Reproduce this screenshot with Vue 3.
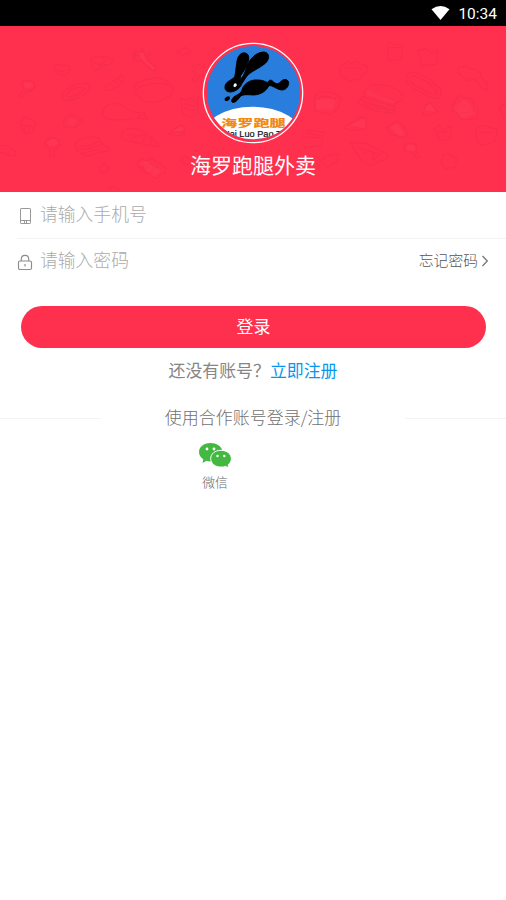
<script setup>
import { ref } from 'vue'

const phone = ref('')
const password = ref('')
</script>

<template>
  <main class="screen">
    <div class="status">
      <svg class="wifi" viewBox="0 0 20 16"><path d="M1 4.2Q10-2.3 19 4.2L10 15Z" fill="#fff" /></svg>
      <span>10:34</span>
    </div>

    <header class="hero">
      <svg class="doodles" viewBox="0 0 506 166" aria-hidden="true">
        <g transform="translate(0 -6) scale(.33333)">
          <g class="line">
            <path d="M65 190q10-14 28-7 15 6 10 20-8 12-22 8l-14 20q-12 2-7-9l12-18q-10-6-7-14Z" />
            <path d="M160 145q6-15 24-8 20-5 27 8-4 20-24 20-22-2-27-20Z M168 148l16 8 18-8" />
            <path d="M272 120q15-16 28-8 18-7 40 9-5 14-26 14l-28 17q-15-4-8-17Z M282 128l18 8 16-14" />
            <path d="M398 100l7 14-2-25 12 20 12-25 8 25 16-10-9 22 24 20q10 12-9 11l-29-28-28-2Z" />
            <path d="M530 94l30-12 12 14-22 10Z M575 142q14-16 25-6M578 150l10 12-12 18 10 5 16-22" />
            <path d="M186 232q6-28 48-40 34-6 36 6-4 24-40 38-38 13-44-4Z M199 228q8-20 32-25 24-2 22 5-8 13-28 19-22 8-26 1Z" />
            <path d="M315 211q0-17 22-26l26-20q15 11 1 28-22 18-49 18Z M332 194l14 7M341 184l14 8M351 176l12 7" />
            <path d="M402 205q5-21 22-19 13-11 30-8 15-9 29-2 14 0 20 13 18 7 17 21-5 20-25 24-20 15-44 12-29-1-36-19-13-9-13-22Z M410 207q19-15 32-11 17-9 28-5 25-4 36 6M425 211v9M445 222v9M464 207v9M488 202v9" />
            <path d="M308 286q-2-29 31-36 25 0 44 18 20 11 37 11 8-7 16 0l-4 8 10 5q2 8-11 7l-13-5q-19 5-35 5-31 3-48-1-22-1-27-12Z M419 280l-1 13" />
            <path d="M190 302l14-14 15-4 15 10 15 7-22 20q-17 9-36-4Z M198 300q20 15 40 2" />
            <path d="M63 315q-7-10 4-15 8-14 17-3 15-2 19 9 12 8-1 15l-5 19H68Z M63 315l40 6M72 322l3 14M86 322v14" />
            <path d="M136 366q15-18 33-10 17 9 7 22-7 7-14 6l2 24q-9 6-13 0l-4-25q-13-5-11-17Z" />
            <path d="M365 350q-3-17 17-24 44-2 65 20 17 14 34 33-49-2-80-14-30-3-36-15Z M383 346q18-8 25-1l-11 15M407 355q17-18 31-7l-14 20M433 366q12-16 24-12l-7 21" />
            <path d="M505 342l35-26 14 5-2 23-23 4Z M513 338l38-3M542 234l17 9 11-9 12 9 13-10-1 46-26 13-20-10Z M550 250l39 10M553 264l36 8" />
            <path d="M226 383q-5-16 17-25 29-13 57-2l8 18 19 11q-5 13-24 10l-35 13q-28-2-42-25Z M229 378q36 7 70-17M241 389q36-1 68-20M246 400q31-8 53-13" />
            <path d="M413 425l14-9 14 7 13-10 16 16 14-2 5 14 11 5q-5 15-17 15l-12 14q-13 1-16-13l-18-2-10-17q-17 4-14-18Z M427 434l11 9 13-13 12 14 13-5M446 458l20-10" />
            <path d="M0 376q25-2 43 15 10 17-5 18-13-6-38-11M300 442l13-12 13 16-10 14-18-6ZM538 421l19-13 20 15-14 12ZM326 510q15-18 32 0" />
          </g>
          <g class="tint"><path d="M72 188h22l6 13-23 4ZM197 305l17-9 20 8-18 12ZM412 98l20 1 4 22 28 21-6 6-30-27ZM518 335l23-15 10 3-1 12ZM141 366l22-10 11 10-8 12-21-1ZM419 428l20-6 44 32-21 17Z" /></g>
        </g>
        <g transform="translate(306 -6) scale(.33333)">
          <g class="line">
            <path d="M245 69l45 7-5 44-38 1Z M252 83h29M337 92l25-6 12 15 23-10-7 42-42 4Z" />
            <path d="M102 154q-4-19 11-20 13-14 24-4 16-11 27 2 20 0 23 16-5 13-17 14-4 22-22 15-14 12-26-2-20 0-20-21Z M116 148q16-11 25 0 16-10 27 0" />
            <path d="M301 180q-3-18 16-24 27 4 57 25l30 26q3 16-3 29-15 2-35-7-33-18-46-25-19-13-19-24Z M311 178q5-13 15-9 29 6 62 38 8 19-5 17-22-9-52-26-20-10-20-20Z" />
            <path d="M457 144l26-8 10 12 18-1 14 14-3 9 20 17v25l-15-8-20-27-21 5-29-23Z" />
            <path d="M178 217q2-28 51-22 46 5 61 32l-2 13-19 8-5 31q-48 1-103-27l-5-10 19-12Z M176 216l91 28M160 239l104 32M167 229l96 29M174 249l11 8 18-3 15 13 17-3 13 12" />
            <path d="M25 237q6-18 19-20l35-1 27 18-11 33-22 16-45-10Z M35 238q25-19 49 0l14-8" />
            <path d="M350 283l10-29 11-6 24 28-27 9ZM110 324l55-34 15 5v28l-32 10ZM435 267l16-32 14-10 13 12 17-3 11 26 10 6-2 30-46 4-12-18-17-9Z M445 268l26-15 35 21M457 280l48-6" />
            <path d="M241 323l32-20 17 12 16 29-14 9-35-10ZM383 327l15-12 16 14 21-11-1 38-30 5-13-17ZM510 326l23-10 41 13-6 37-46 10-12-24Z M520 338l46-2M394 337l33-2" />
            <path d="M132 367l51 4 63 32-10 18-20 4-21 12-26-12-18-28ZM155 382l74 23M179 386l-5 18M197 394l5 24M219 402l-18 20" />
            <path d="M293 382q11-17 33-9 12 12 2 21l14 16-8 5-15-19q-22 3-26-14ZM411 405l18-5 24 18-6 24-30 4-11-14ZM48 418q20-18 51-14l-8 22-25 14q-24-4-18-22ZM0 330l57 7-13 39-44 7M0 338l51 10M0 351l45 2M580 260l18-7M580 262l14 35" />
          </g>
          <g class="tint"><path d="M30 241q27-13 59 0l-9 28-51-2ZM184 212l83 31-4 7-85-29ZM355 272l16-22 18 24ZM132 316l46-22v31ZM442 265l36-28 32 46-42 10ZM300 374h22l6 17-24 4ZM253 321l22-12 20 36-15 2Z" /></g>
        </g>
      </svg>
      <svg class="logo" viewBox="36 18 306 306" role="img" aria-label="海罗跑腿">
        <defs><clipPath id="badge"><circle cx="190.500" cy="170" r="140" /></clipPath></defs>
        <circle cx="189" cy="171" r="149" fill="none" stroke="#fff" stroke-width="4" />
        <g clip-path="url(#badge)">
          <path d="M50 30h282v282H50Z" fill="#287ddd" />
          <ellipse cx="188" cy="306" rx="152" ry="94" fill="#fff" />
          <g transform="translate(90 24)" fill="#000">
            <path stroke="#000" stroke-width="3" d="M15 128C15 112 38 108 44 98C50 75 48 50 56 37C64 22 84 24 86 38C88 55 74 78 64 92C60 97 60 102 62 104C68 100 72 92 78 75C86 46 108 24 132 24C150 26 149 46 136 58C118 73 98 80 86 91C77 99 74 108 66 118C62 130 50 142 32 144C20 144 14 138 15 128Z" />
            <path stroke="#000" stroke-width="3" d="M68 132C76 116 92 107 112 108C132 108 140 116 143 116C148 104 156 108 163 116C172 122 178 118 184 111C192 104 206 105 206 118C204 130 198 138 184 138C170 136 158 124 147 124C142 136 128 152 100 153C82 152 68 150 60 158C52 170 44 178 36 174C32 168 40 158 48 155C58 150 66 144 68 132Z" />
            <ellipse cx="22" cy="164" rx="9" ry="6" transform="rotate(-30 22 164)" />
            <path d="M42 119l6-1 3 6-6 6-5-3Z" fill="#fff" />
          </g>
          <text class="brand" transform="translate(93 273) scale(1.52 1)">海罗跑腿</text>
          <text class="latin" x="99" y="303" textLength="196" lengthAdjust="spacingAndGlyphs">Hai Luo Pao Tui</text>
        </g>
      </svg>
      <h1>海罗跑腿外卖</h1>
    </header>

    <form @submit.prevent>
      <label class="field">
        <svg class="ico" viewBox="0 0 16 18"><g fill="none" stroke="#999"><rect x="3.500" y="1.500" width="10" height="15" rx=".6" /><path d="M3.500 13.500h10M7.500 13.500v3M9.500 13.500v3" /></g></svg>
        <input v-model="phone" type="tel" placeholder="请输入手机号" />
      </label>
      <label class="field second">
        <svg class="ico" viewBox="0 0 16 18"><g fill="none" stroke="#8c8c8c" stroke-width="1.150"><rect x="1.500" y="8" width="13" height="8.500" rx="1.500" /><path d="M4.300 8V6q0-3.700 3.700-3.700T11.700 6v2M8 11v2.500" /></g></svg>
        <input v-model="password" type="password" placeholder="请输入密码" />
        <a class="forgot"><span>忘记密码</span><svg viewBox="0 0 8 12"><path d="M1.500 1l4.800 5-4.800 5" fill="none" stroke="#777" stroke-width="1.300" /></svg></a>
      </label>
      <button class="login">登录</button>
    </form>

    <p class="signup">还没有账号？<a>立即注册</a></p>
    <div class="partner"><span>使用合作账号登录/注册</span></div>
    <div class="wechat">
      <svg viewBox="0 0 34 26">
        <path d="M12.500 1C5.500 1 1 5 1 10c0 3 1.600 5.500 4.300 7.200L4.500 21l4-2.200c1.600.5 3.500.7 5.500.5C23 18 25 13 24.500 9 23.500 4 18.500 1 12.500 1Z" fill="#43b941" />
        <path d="M23 8.300c-6.200 0-10.300 3.700-10.300 8.400s4.300 8.400 10.300 8.400c1.700 0 3.200-.2 4.500-.7l3.500 1.400-.8-3.100c2-1.500 3.200-3.600 3.200-6 0-4.700-4.500-8.400-10.400-8.400Z" fill="#43b941" stroke="#fff" stroke-width="1" />
        <g fill="#fff"><circle cx="9" cy="7" r="1.400" /><circle cx="16" cy="7" r="1.400" /><circle cx="19.500" cy="14" r="1.250" /><circle cx="26.300" cy="14" r="1.250" /></g>
      </svg>
      <span>微信</span>
    </div>
  </main>
</template>

<style>
body { margin: 0; background: #fff; }
</style>

<style scoped>
.screen { height: 900px; overflow: hidden; background: #fff; font-family: "Noto Sans CJK SC", sans-serif; font-weight: 300; }
.status { height: 26px; box-sizing: border-box; padding: 1px 9px 0 0; display: flex; align-items: center; justify-content: flex-end; gap: 7px; background: #000; color: #fff; font: 400 15.5px Roboto, sans-serif; }
.wifi { width: 21px; height: 16px; position: relative; top: -1px; }
.hero { position: relative; height: 166px; padding-top: 16px; box-sizing: border-box; background: #ff304e; display: flex; flex-direction: column; align-items: center; }
.doodles { position: absolute; inset: 0; width: 506px; height: 166px; }
.line { fill: none; stroke: #dc2946; stroke-opacity: .25; stroke-width: 3.5; stroke-linejoin: round; }
.tint { fill: #ff6378; fill-opacity: .13; }
.logo { position: relative; width: 102px; height: 102px; }
.brand { font: 900 32px "Noto Sans CJK SC", sans-serif; fill: #ef8a16; }
.latin { font: 400 27px "Liberation Sans", sans-serif; fill: #111; stroke: #111; stroke-width: .6; }
h1 { position: relative; margin: 5px 0 0; font-size: 21px; line-height: 30px; font-weight: 400; color: #fff; }
.field { display: flex; align-items: center; height: 47px; box-sizing: border-box; margin-left: 17px; padding: 0 17px 1px 0; border-bottom: 1px solid #f3f3f3; }
.field.second { border: 0; height: 43px; padding-bottom: 0; }
.ico { width: 16px; height: 18px; flex: none; margin-right: 7px; position: relative; top: 1px; }
input { flex: 1; min-width: 0; padding: 0 0 3px; border: 0; outline: 0; background: none; font: inherit; font-size: 17.8px; line-height: 26px; color: #333; }
input::placeholder { color: #aaa; opacity: 1; }
.forgot { display: flex; align-items: center; gap: 3px; font-size: 14.8px; color: #555; }
.forgot span { padding-bottom: 3px; }
.forgot svg { width: 8px; height: 12px; }
.login { display: block; width: 465px; height: 42px; margin: 24px 0 0 21px; padding: 0 0 3px; border: 0; border-radius: 21px; background: #ff304e; color: #fff; font: 400 17px "Noto Sans CJK SC", sans-serif; }
.signup { margin: 9px 0 0; text-align: center; font-size: 16.9px; line-height: 26px; font-weight: 400; color: #858585; }
.signup a { color: #0796ed; }
.partner { display: flex; align-items: center; justify-content: space-between; margin-top: 20px; height: 26px; font-size: 17px; color: #707070; }
.partner::before, .partner::after { content: ""; width: 101px; height: 1px; margin-top: 5px; background: #f3f3f3; }
.wechat { width: 34px; margin: 13px 0 0 198px; display: flex; flex-direction: column; align-items: center; color: #666; font-size: 12.8px; line-height: 18px; }
.wechat svg { width: 34px; height: 26px; margin-bottom: 5px; }
</style>
